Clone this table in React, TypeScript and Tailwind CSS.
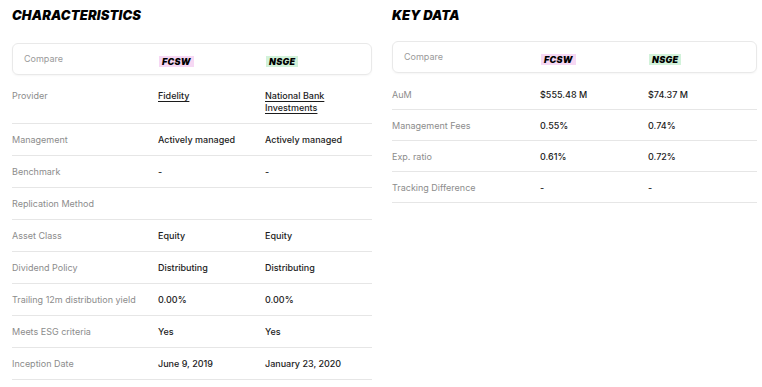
import React from 'react';

type Cell = { text: string; link?: boolean };
type Row = { label: string; a: Cell; b: Cell };

const characteristics: Row[] = [
  { label: 'Provider', a: { text: 'Fidelity', link: true }, b: { text: 'National Bank Investments', link: true } },
  { label: 'Management', a: { text: 'Actively managed' }, b: { text: 'Actively managed' } },
  { label: 'Benchmark', a: { text: '-' }, b: { text: '-' } },
  { label: 'Replication Method', a: { text: '' }, b: { text: '' } },
  { label: 'Asset Class', a: { text: 'Equity' }, b: { text: 'Equity' } },
  { label: 'Dividend Policy', a: { text: 'Distributing' }, b: { text: 'Distributing' } },
  { label: 'Trailing 12m distribution yield', a: { text: '0.00%' }, b: { text: '0.00%' } },
  { label: 'Meets ESG criteria', a: { text: 'Yes' }, b: { text: 'Yes' } },
  { label: 'Inception Date', a: { text: 'June 9, 2019' }, b: { text: 'January 23, 2020' } },
];

const keyData: Row[] = [
  { label: 'AuM', a: { text: '$555.48 M' }, b: { text: '$74.37 M' } },
  { label: 'Management Fees', a: { text: '0.55%' }, b: { text: '0.74%' } },
  { label: 'Exp. ratio', a: { text: '0.61%' }, b: { text: '0.72%' } },
  { label: 'Tracking Difference', a: { text: '-' }, b: { text: '-' } },
];

const Badge = ({ text, tone }: { text: string; tone: 'pink' | 'green' }) => (
  <span
    className={`inline-block px-[3px] text-[9px] leading-[11px] font-black italic tracking-[0.03em] text-black ${
      tone === 'pink' ? 'bg-[#f6d8f4]' : 'bg-[#d2f2da]'
    }`}
  >
    {text}
  </span>
);

const Value = ({ cell }: { cell: Cell }) => (
  <span className={`text-[9px] leading-[12px] font-medium text-[#1c1c1c] ${cell.link ? 'underline underline-offset-[2px]' : ''}`}>
    {cell.text}
  </span>
);

const Section = ({
  title,
  rows,
  cols,
  boxCols,
  rowH,
  boxMt,
  listMt,
}: {
  title: string;
  rows: Row[];
  cols: string;
  boxCols: string;
  rowH: string;
  boxMt: string;
  listMt: string;
}) => (
  <div className="flex flex-col">
    <h2 className="text-[13px] leading-[14px] font-black italic tracking-[0.01em] text-black">{title}</h2>

    {/* Compare header */}
    <div className={`${boxMt} grid ${boxCols} items-center h-[32px] pl-[11px] rounded-md border border-[#e9e9e9] shadow-[0_1px_2px_rgba(0,0,0,0.04)]`}>
      <span className="text-[9px] text-[#9a9a9a]">Compare</span>
      <div>
        <Badge text="FCSW" tone="pink" />
      </div>
      <div>
        <Badge text="NSGE" tone="green" />
      </div>
    </div>

    <div className={`${listMt} flex flex-col`}>
      {rows.map((r) => (
        <div key={r.label} className={`grid ${cols} items-start ${rowH} pt-[10px] border-b border-[#e6e6e6]`}>
          <span className="text-[9px] leading-[12px] text-[#8c8c8c]">{r.label}</span>
          <Value cell={r.a} />
          <Value cell={r.b} />
        </div>
      ))}
    </div>
  </div>
);

const App: React.FC = () => {
  return (
    <div className="w-[762px] h-[387px] bg-white overflow-hidden" style={{ fontFamily: 'Inter, "Noto Sans", sans-serif' }}>
      <div className="flex gap-[20px] pl-[12px] pt-[8px]">
        <div className="w-[360px]">
          <Section
            title="CHARACTERISTICS"
            rows={characteristics}
            cols="grid-cols-[146px_107px_1fr]"
            boxCols="grid-cols-[135px_107px_1fr]"
            rowH="min-h-[32px] pb-[9px]"
            boxMt="mt-[21px]"
            listMt="mt-[5px]"
          />
        </div>
        <div className="w-[365px]">
          <Section
            title="KEY DATA"
            rows={keyData}
            cols="grid-cols-[148px_108px_1fr]"
            boxCols="grid-cols-[137px_108px_1fr]"
            rowH="h-[31px]"
            boxMt="mt-[19px]"
            listMt="mt-[6px]"
          />
        </div>
      </div>
    </div>
  );
};

export default App;
